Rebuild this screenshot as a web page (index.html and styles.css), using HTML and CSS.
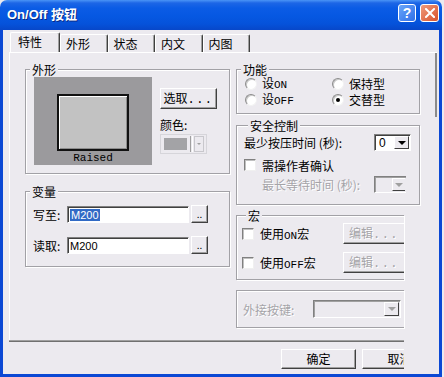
FILE: index.html
```html
<!DOCTYPE html>
<html lang="zh-CN">
<head>
  <meta charset="UTF-8" />
  <title>On/Off 按钮</title>
  <link rel="stylesheet" href="styles.css">
</head>
<body>

  <div class="window">
    <!-- Title bar -->
    <div class="titlebar">
      <span class="title">On/Off 按钮</span>
      <span class="tb-btn help">?</span>
      <span class="tb-btn close">
        <svg width="10" height="10" viewBox="0 0 10 10"><path d="M1 1 L9 9 M9 1 L1 9" stroke="#fff" stroke-width="2" stroke-linecap="square"/></svg>
      </span>
    </div>

    <div class="client">
      <div class="tabs">
        <div class="tab active">特性</div>
        <div class="tab">外形</div>
        <div class="tab">状态</div>
        <div class="tab">内文</div>
        <div class="tab">内图</div>
      </div>

      <div class="panel">
        <!-- Left column -->
        <div class="col">
          <fieldset class="group">
            <legend>外形</legend>
            <div class="look">
              <div class="preview">
                <div class="sample"></div>
                <span class="sample-name">Raised</span>
              </div>
              <div class="look-side">
                <button class="btn pick">选取<span class="dots">...</span></button>
                <div class="color-label">颜色:</div>
                <div class="color-combo">
                  <span class="swatch"></span>
                  <span class="split"></span>
                  <span class="mini-drop"><span class="tri small"></span></span>
                </div>
              </div>
            </div>
          </fieldset>

          <fieldset class="group var">
            <legend>变量</legend>
            <div class="var-body">
              <div class="var-row">
                <span class="var-label">写至:</span>
                <div class="field"><span class="sel">M200</span></div>
                <button class="btn browse">..</button>
              </div>
              <div class="var-row">
                <span class="var-label">读取:</span>
                <div class="field">M200</div>
                <button class="btn browse">..</button>
              </div>
            </div>
          </fieldset>
        </div>

        <!-- Right column -->
        <div class="col">
          <fieldset class="group">
            <legend>功能</legend>
            <div class="radios">
              <div class="opt"><span class="radio"></span><span>设<span class="mono">ON</span></span></div>
              <div class="opt"><span class="radio"></span><span>保持型</span></div>
              <div class="opt"><span class="radio"></span><span>设<span class="mono">OFF</span></span></div>
              <div class="opt"><span class="radio checked"></span><span>交替型</span></div>
            </div>
          </fieldset>

          <fieldset class="group safety">
            <legend>安全控制</legend>
            <div class="safe-row">
              <span>最少按压时间 (秒):</span>
              <div class="combo">
                <span class="value">0</span>
                <span class="drop"><span class="tri"></span></span>
              </div>
            </div>
            <div class="check-row">
              <span class="check"></span><span>需操作者确认</span>
            </div>
            <div class="safe-row sub">
              <span class="off">最长等待时间 (秒):</span>
              <div class="combo disabled cut">
                <span class="value"></span>
                <span class="drop"><span class="tri"></span></span>
              </div>
            </div>
          </fieldset>

          <fieldset class="group open macro">
            <legend>宏</legend>
            <div class="macro-row">
              <span class="check"></span><span>使用<span class="mono">ON</span>宏</span>
              <button class="btn edit off">编辑<span class="dots">...</span></button>
            </div>
            <div class="macro-row">
              <span class="check"></span><span>使用<span class="mono">OFF</span>宏</span>
              <button class="btn edit off">编辑<span class="dots">...</span></button>
            </div>
          </fieldset>

          <fieldset class="group open ext">
            <div class="ext-row">
              <span class="off">外接按键:</span>
              <div class="combo disabled wide">
                <span class="value"></span>
                <span class="drop"><span class="tri"></span></span>
              </div>
            </div>
          </fieldset>
        </div>
      </div>

      <div class="sep"></div>

      <div class="footer">
        <button class="btn dlg">确定</button>
        <button class="btn dlg">取消</button>
      </div>
    </div>
  </div>

</body>
</html>
```

FILE: styles.css
```css
:root {
  --bg: #eceaef;
  --frame: #0b48d4;
  --line: #a2a1a6;
  --shade: #808080;
  --dark: #404040;
  --off: #a5a4a8;
}

* {
  box-sizing: border-box;
}

body {
  margin: 0;
  background: var(--bg);
  font-family: "Noto Sans CJK SC", sans-serif;
  font-size: 12px;
  color: #000;
}

.window {
  width: 442px;
  height: 377px;
  display: flex;
  flex-direction: column;
}

/* Title bar */
.titlebar {
  height: 30px;
  flex: none;
  display: flex;
  align-items: center;
  gap: 4px;
  padding: 0 3px 4px 7px;
  border-radius: 7px 7px 0 0;
  background: linear-gradient(#4a94f6 0, #1d66e6 3px, #0b5ce5 8px, #0658e2 16px, #0552da 24px, #0747c9 30px);
}

.title {
  margin-right: auto;
  color: #fff;
  font: bold 13px "Liberation Sans", "Noto Sans CJK SC", sans-serif;
  text-shadow: 1px 1px #0a2b86;
}

.tb-btn {
  width: 18px;
  height: 18px;
  border: 1px solid #fff;
  border-radius: 3px;
  display: flex;
  align-items: center;
  justify-content: center;
  color: #fff;
  font: bold 14px "Liberation Sans", sans-serif;
}

.help {
  background: linear-gradient(135deg, #6aa6fa, #2f6fe8);
}

.close {
  width: 19px;
  background: linear-gradient(135deg, #ee9a7c, #d9532c);
}

/* Client area */
.client {
  flex: 1;
  border: 0 solid var(--frame);
  border-width: 0 3px 3px 3px;
  padding: 2px 0 0 6px;
  display: flex;
  flex-direction: column;
}

.tabs {
  height: 20px;
  margin-left: 1px;
  display: flex;
  align-items: flex-end;
}

.tab {
  width: 47.5px;
  height: 18px;
  padding: 1px 0 0 5px;
  line-height: 15px;
  border: 1px solid #fff;
  border-right-color: var(--dark);
  border-bottom: none;
  border-radius: 2px 2px 0 0;
  box-shadow: inset -1px 0 #a0a0a0;
}

.tab.active {
  width: 50px;
  height: 20px;
  padding: 1px 0 0 7px;
}

.panel {
  width: 428px;
  height: 288px;
  flex: none;
  border-top: 1px solid #fff;
  border-left: 1px solid #fff;
  padding: 9px 0 0 15px;
  display: grid;
  grid-template-columns: 205px 184px;
  column-gap: 6px;
  align-items: start;
  background: linear-gradient(#8a8a8a, #8a8a8a) right top / 2px 64px no-repeat;
}

.col {
  display: flex;
  flex-direction: column;
}

/* Group boxes */
.group {
  margin: 0;
  padding: 0;
  min-width: 0;
  border: 1px solid var(--line);
  box-shadow: inset 1px 1px #fff, 1px 1px #fff;
}

.group legend {
  margin-left: 4px;
  padding: 0 2px;
  line-height: 15px;
  background: var(--bg);
}

.group.open {
  border-right: none;
  width: 168px;
}

/* Look */
.look {
  display: flex;
  gap: 8px;
  padding: 0 8px 8px 8px;
}

.preview {
  width: 118px;
  height: 88px;
  background: #9b9a9d;
  display: flex;
  flex-direction: column;
  align-items: center;
  padding-top: 17px;
}

.sample {
  width: 72px;
  height: 57px;
  border: 2px solid #111;
  background: #c2c2c2;
  box-shadow: inset 1px 1px #fff, inset -1px -1px #8c8c8c;
}

.sample-name {
  margin-top: 1px;
  font: 11px/12px "Liberation Mono", monospace;
}

.look-side {
  display: flex;
  flex-direction: column;
  align-items: flex-start;
}

.btn {
  font: inherit;
  color: #000;
  background: var(--bg);
  border: 1px solid;
  border-color: #fff var(--dark) var(--dark) #fff;
  box-shadow: inset -1px -1px #a0a0a0;
  padding: 0;
  line-height: 14px;
}

.dots {
  letter-spacing: 1.5px;
  font-family: "Liberation Mono", monospace;
}

.pick {
  margin-top: 11px;
  width: 57px;
  height: 21px;
}

.color-label {
  margin-top: 9px;
  line-height: 14px;
}

.color-combo {
  margin-top: 2px;
  width: 47px;
  height: 20px;
  display: flex;
  align-items: center;
  padding: 0 2px 0 3px;
  border: 1px solid #d6d5da;
  background: var(--bg);
}

.swatch {
  width: 24px;
  height: 12px;
  background: #a3a3a6;
}

.split {
  width: 3px;
  height: 16px;
  margin-left: 3px;
  border-left: 1px solid #a0a0a0;
  border-right: 1px solid #fff;
}

.mini-drop {
  width: 11px;
  height: 16px;
  margin-left: 1px;
  border: 1px solid #c8c7cc;
  display: flex;
  align-items: center;
  justify-content: center;
}

.tri {
  width: 0;
  height: 0;
  border-left: 4px solid transparent;
  border-right: 4px solid transparent;
  border-top: 4px solid #000;
}

.tri.small {
  border-width: 2px 2px 0;
  border-top-color: #a0a0a0;
}

/* Variables */
.var {
  margin-top: 10px;
}

.var-body {
  display: flex;
  flex-direction: column;
  gap: 13px;
  padding: 6px 0 12px 7px;
}

.var-row {
  height: 18px;
  display: flex;
  align-items: center;
}

.var-label {
  width: 34px;
}

.field {
  width: 122px;
  height: 17px;
  background: #fff;
  border: 1px solid;
  border-color: var(--shade) #fff #fff var(--shade);
  box-shadow: inset 1px 1px var(--dark);
  padding: 1px 0 0 2px;
  font: 11px/14px "Liberation Sans", sans-serif;
}

.sel {
  background: #316ac5;
  color: #fff;
  padding: 0 1px;
}

.browse {
  width: 17px;
  height: 18px;
  margin-left: 2px;
  font-size: 10px;
  line-height: 10px;
}

/* Function radios */
.radios {
  display: grid;
  grid-template-columns: 87px auto;
  row-gap: 3px;
  padding: 0 0 7px 8px;
}

.opt {
  height: 13px;
  display: flex;
  align-items: center;
  gap: 5px;
  line-height: 13px;
}

.mono {
  font: 11px "Liberation Mono", monospace;
}

.radio {
  width: 12px;
  height: 12px;
  border-radius: 50%;
  border: 1px solid;
  border-color: #8c8c8c #f2f2f2 #f2f2f2 #8c8c8c;
  background: #fff;
  box-shadow: inset 1px 1px #c8c8c8;
  display: flex;
  align-items: center;
  justify-content: center;
}

.radio.checked::after {
  content: "";
  width: 4px;
  height: 4px;
  border-radius: 50%;
  background: #000;
}

/* Safety */
.safety {
  margin-top: 4px;
  padding: 1px 8px 11px 7px;
}

.safe-row {
  height: 17px;
  display: flex;
  align-items: center;
  justify-content: space-between;
}

.safe-row.sub {
  margin-top: 4px;
  padding: 0 5px 0 18px;
}

.check-row {
  margin-top: 7px;
  height: 14px;
  display: flex;
  align-items: center;
  gap: 6px;
}

.check {
  width: 12px;
  height: 12px;
  flex: none;
  background: #fff;
  border: 1px solid;
  border-color: var(--shade) #f0f0f0 #f0f0f0 var(--shade);
  box-shadow: inset 1px 1px #c0c0c0;
}

.off {
  color: var(--off);
  text-shadow: 1px 1px #fff;
}

.combo {
  width: 37px;
  height: 17px;
  display: flex;
  background: #fff;
  border: 1px solid;
  border-color: var(--shade) #fff #fff var(--shade);
  box-shadow: inset 1px 1px var(--dark);
  padding: 1px;
}

.combo .value {
  flex: 1;
  padding-left: 3px;
  font: 12px/14px "Liberation Sans", sans-serif;
}

.combo .drop {
  width: 15px;
  background: var(--bg);
  border: 1px solid;
  border-color: #fff var(--dark) var(--dark) #fff;
  display: flex;
  align-items: center;
  justify-content: center;
}

.combo.disabled {
  background: var(--bg);
  box-shadow: inset 1px 1px #a0a0a0;
}

.combo.disabled .tri {
  border-top-color: #a0a0a0;
}

.combo.cut {
  width: 32px;
  border-right: none;
}

.combo.cut .drop {
  width: 13px;
  border-right: none;
}

.combo.wide {
  width: 88px;
  height: 18px;
}

/* Macro */
.macro {
  margin-top: 3px;
  padding: 0 0 6px 5px;
}

.macro-row {
  height: 21px;
  display: flex;
  align-items: center;
  gap: 6px;
}

.macro-row + .macro-row {
  margin-top: 8px;
}

.edit {
  margin-left: auto;
  width: 61px;
  height: 21px;
  border-right: none;
  box-shadow: inset 0 -1px #a0a0a0;
}

.ext {
  margin-top: 10px;
  padding: 9px 3px 9px 6px;
}

.ext-row {
  height: 18px;
  display: flex;
  align-items: center;
  justify-content: space-between;
}

/* Footer */
.sep {
  width: 395px;
  height: 2px;
  border-top: 1px solid #a0a0a0;
  border-bottom: 1px solid #707070;
}

.footer {
  width: 395px;
  overflow: hidden;
  display: flex;
  gap: 6px;
  padding: 7px 0 0 272px;
}

.dlg {
  flex: none;
  width: 75px;
  height: 20px;
}
```
